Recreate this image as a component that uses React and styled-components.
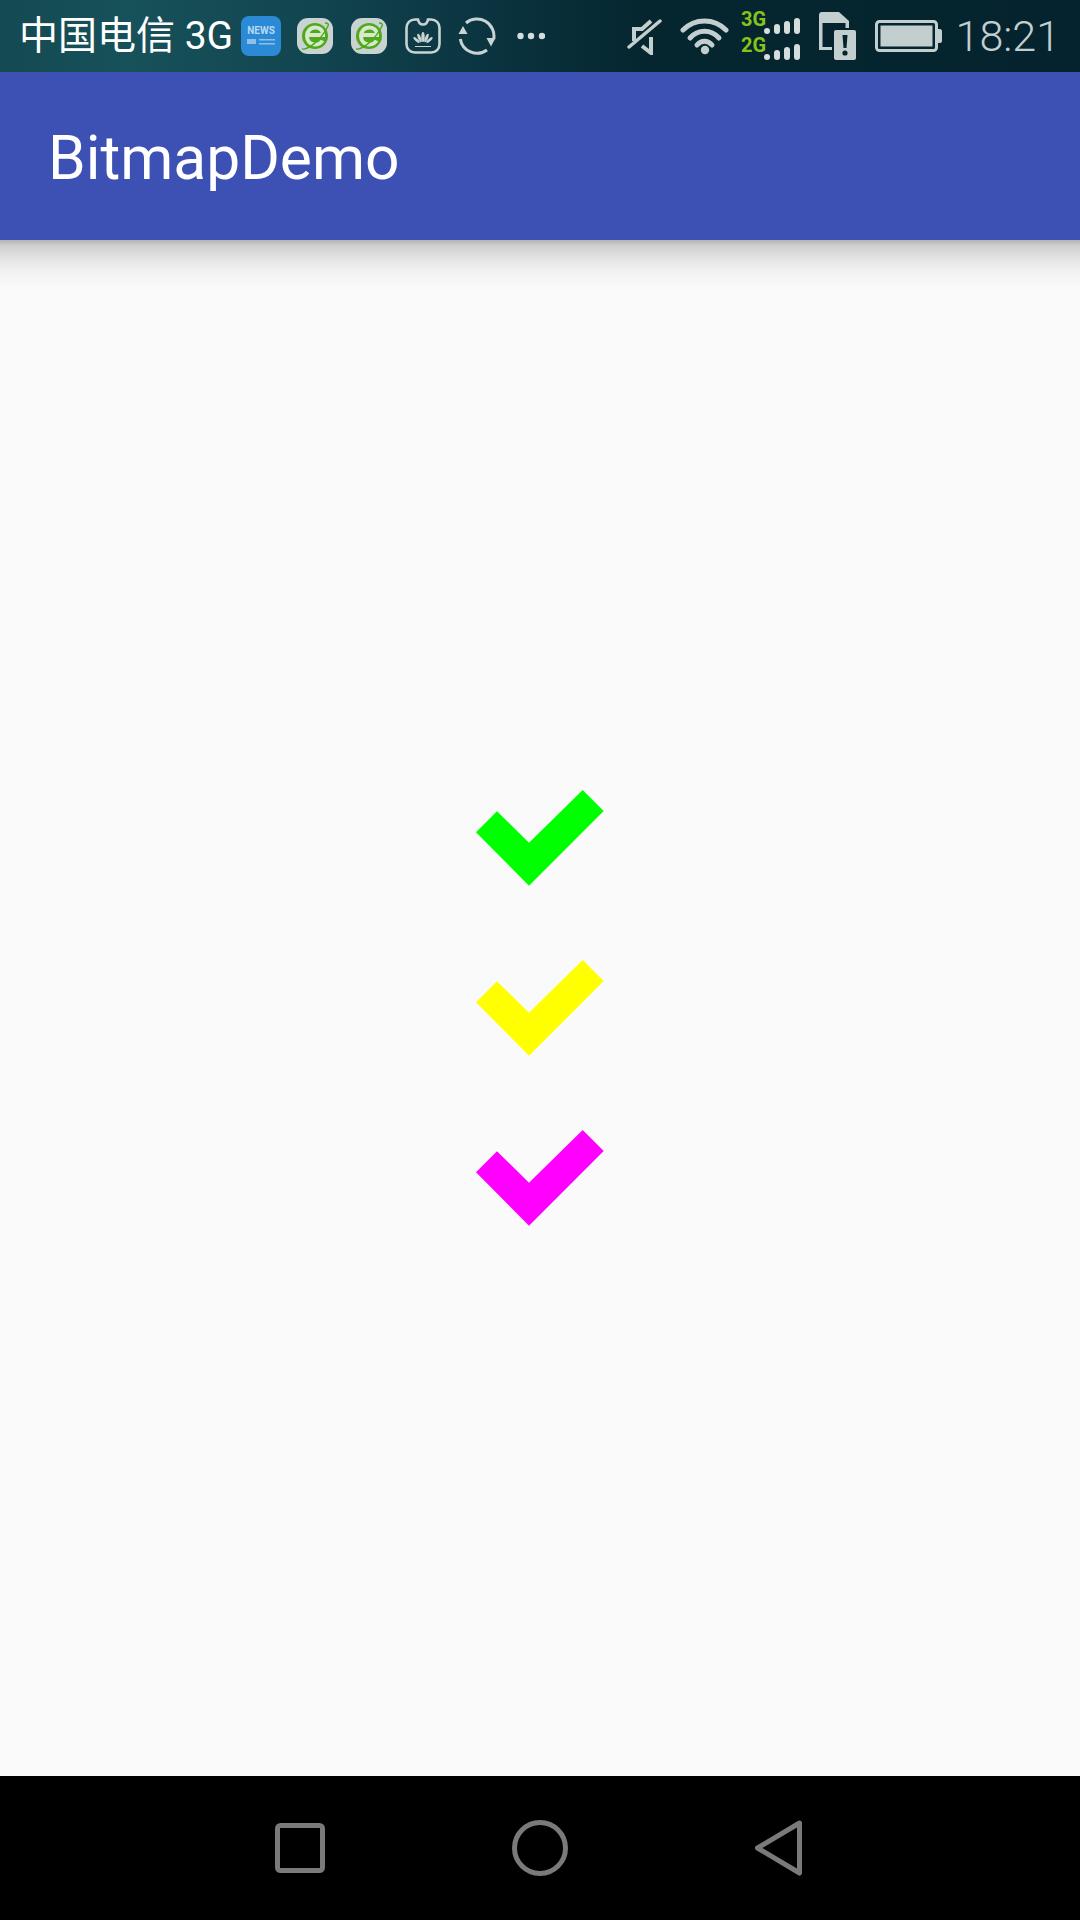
import React from "react";
import styled, { createGlobalStyle } from "styled-components";

const GlobalStyle = createGlobalStyle`
    html, body {
        margin: 0;
        padding: 0;
        background: #fafafa;
    }
`

const Screen = styled.div`
    width: 1080px;
    height: 1920px;
    display: flex;
    flex-direction: column;
    overflow: hidden;
    font-family: Roboto, "Noto Sans CJK SC", sans-serif;
`
const StatusBar = styled.div`
    height: 72px;
    flex: none;
    display: flex;
    align-items: center;
    justify-content: space-between;
    padding: 0 20px 0 19px;
    box-sizing: border-box;
    background: linear-gradient(90deg, #144a52 0, #17515a 12%, #124650 28%, #0a3440 45%, #05262f 60%, #04232e 100%);
`
const StatusGroup = styled.div`
    display: flex;
    align-items: center;
`
const Carrier = styled.span`
    font-size: 39px;
    line-height: 72px;
    color: #fff;
    white-space: nowrap;
`
const Clock = styled.span`
    margin-left: 14px;
    font-size: 43px;
    font-weight: 300;
    line-height: 72px;
    color: #c3cfcf;
`
const StatusIcon = styled.svg`
    display: block;
    flex: none;
    margin-left: ${props => props.$gap || 0}px;
`
const AppBar = styled.div`
    position: relative;
    height: 168px;
    flex: none;
    display: flex;
    align-items: center;
    padding-left: 48px;
    background: #3d51b4;
    &::after {
        content: "";
        position: absolute;
        left: 0;
        right: 0;
        top: 100%;
        height: 48px;
        background: linear-gradient(180deg, #b4b4b4 0, #cfcfcf 12%, #e6e6e6 42%, #f4f4f4 72%, #fafafa 100%);
    }
`
const AppTitle = styled.div`
    margin-top: 6px;
    font-size: 60.5px;
    line-height: 72px;
    color: #fff;
`
const Content = styled.div`
    flex: 1;
    display: flex;
    flex-direction: column;
    align-items: center;
    justify-content: center;
    gap: 74px;
    background: #fafafa;
`
const NavBar = styled.div`
    height: 144px;
    flex: none;
    display: flex;
    align-items: center;
    justify-content: center;
    gap: 187px;
    padding-right: 4px;
    background: #000;
`

const Check = ({ color }) => (
    <svg width="128" height="96" viewBox="0 0 128 96" style={{ display: "block" }}>
        <path d="M0 42.3 21 21.3 53 52.7 106.7 0 127.7 21 53 95.7Z" fill={color} />
    </svg>
);

const EIcon = ({ gap }) => (
    <StatusIcon $gap={gap} width="36" height="36" viewBox="0 0 36 36">
        <rect width="36" height="36" rx="11" fill="#c9d3d1" />
        <circle cx="18" cy="18" r="13" fill="#4fa91c" />
        <path d="M10 17h16c0-4.500-3.200-7.500-7.800-7.500-4.800 0-8.200 3.500-8.200 8.500s3.400 8.500 8.200 8.500c3.400 0 6-1.500 7.200-4" fill="none" stroke="#d9e8cc" strokeWidth="4" />
        <path d="M5 31C10 32 23 24 31 8c1-2 0-3-3-3" fill="none" stroke="#4fa91c" strokeWidth="1.400" />
    </StatusIcon>
);

const App = () => {
    return (
        <Screen>
            <GlobalStyle />
            <StatusBar>
                <StatusGroup>
                    <Carrier>中国电信 3G</Carrier>
                    <StatusIcon $gap={8} width="40" height="40" viewBox="0 0 40 40">
                        <rect width="40" height="40" rx="8" fill="#2a8ad6" />
                        <text x="20" y="18" textAnchor="middle" fontFamily="Roboto, sans-serif" fontWeight="700" fontSize="10" fill="#b9d9f2">NEWS</text>
                        <rect x="6" y="23" width="9" height="5" fill="#8fc0e8" />
                        <rect x="18" y="23" width="16" height="1.500" fill="#8fc0e8" />
                        <rect x="18" y="27" width="16" height="1.500" fill="#8fc0e8" />
                    </StatusIcon>
                    <EIcon gap={16} />
                    <EIcon gap={18} />
                    <StatusIcon $gap={18} width="36" height="36" viewBox="0 0 36 36">
                        <path d="M10 1.500h3c.5 3 2.500 5 5 5s4.500-2 5-5h3c5 0 8.500 3.500 8.500 8.500v16c0 5-3.500 8.500-8.500 8.500H10c-5 0-8.500-3.500-8.500-8.500V10C1.500 5 5 1.500 10 1.500Z" fill="none" stroke="#c9d3d3" strokeWidth="2.600" />
                        <g fill="#c9d3d3">
                            <ellipse cx="18" cy="19" rx="1.700" ry="5" />
                            <ellipse cx="14.500" cy="20" rx="1.500" ry="4.500" transform="rotate(-22 14.500 20)" />
                            <ellipse cx="21.500" cy="20" rx="1.500" ry="4.500" transform="rotate(22 21.500 20)" />
                            <ellipse cx="11.500" cy="22" rx="1.400" ry="4" transform="rotate(-48 11.500 22)" />
                            <ellipse cx="24.500" cy="22" rx="1.400" ry="4" transform="rotate(48 24.500 22)" />
                            <rect x="10" y="28" width="16" height="1" />
                        </g>
                    </StatusIcon>
                    <StatusIcon $gap={17} width="38" height="38" viewBox="0 0 38 38">
                        <path d="M2.300 22A17 17 0 0 0 29 33" fill="none" stroke="#c9d3d3" strokeWidth="3" />
                        <path d="M8 6A17 17 0 0 1 35.700 22" fill="none" stroke="#c9d3d3" strokeWidth="3" />
                        <path d="M5 9 .5 17H9.500Z" fill="#c9d3d3" />
                        <path d="M33 29.500 28.500 21H37.500Z" fill="#c9d3d3" />
                    </StatusIcon>
                    <StatusIcon $gap={21} width="28" height="8" viewBox="0 0 28 8">
                        <circle cx="3.500" cy="4" r="3.200" fill="#d5dddd" />
                        <circle cx="14" cy="4" r="3.200" fill="#d5dddd" />
                        <circle cx="25" cy="4" r="3.200" fill="#d5dddd" />
                    </StatusIcon>
                </StatusGroup>
                <StatusGroup>
                    <StatusIcon width="36" height="37" viewBox="0 0 36 37">
                        <path d="M3 29 34 3" stroke="#c3cfcf" strokeWidth="3.500" strokeLinecap="round" />
                        <path d="M8 23V11h8l9-8" fill="none" stroke="#c3cfcf" strokeWidth="4" />
                        <path d="M16 28l9 7V19" fill="none" stroke="#c3cfcf" strokeWidth="4" />
                    </StatusIcon>
                    <StatusIcon $gap={18} width="49" height="37" viewBox="0 0 49 37">
                        <g fill="none" stroke="#c3cfcf" strokeWidth="5" strokeLinecap="round">
                            <path d="M3 12C15 0 34 0 46 12" />
                            <path d="M10 20C18 11 31 11 39 20" />
                            <path d="M17 27C21 22 28 22 32 27" />
                        </g>
                        <circle cx="25" cy="32" r="4.200" fill="#c3cfcf" />
                    </StatusIcon>
                    <StatusIcon $gap={12} width="60" height="60" viewBox="0 -3 60 60">
                        <g fontFamily="Roboto, sans-serif" fontWeight="700" fontSize="20" fill="#86c41c">
                            <text x="0" y="17">3G</text>
                            <text x="0" y="43">2G</text>
                        </g>
                        <g fill="#d5dddd">
                            <circle cx="26" cy="22" r="3" />
                            <rect x="33" y="15" width="6" height="10" rx="3" />
                            <rect x="43" y="12" width="6" height="13" rx="3" />
                            <rect x="53" y="9" width="6" height="16" rx="3" />
                            <circle cx="26" cy="48" r="3" />
                            <rect x="33" y="41" width="6" height="10" rx="3" />
                            <rect x="43" y="38" width="6" height="13" rx="3" />
                            <rect x="53" y="35" width="6" height="16" rx="3" />
                        </g>
                    </StatusIcon>
                    <StatusIcon $gap={18} width="37" height="48" viewBox="0 0 37 48">
                        <path d="M3 0H20L30 9V38H0V3C0 1 1 0 3 0Z" fill="#c3cfcf" />
                        <rect x="3.500" y="11" width="23" height="24" fill="#04232e" />
                        <rect x="13" y="16" width="24" height="32" rx="2" fill="#04232e" />
                        <rect x="15" y="18" width="22" height="30" rx="2" fill="#c3cfcf" />
                        <path d="M23.500 23h5l-1 13h-3Z" fill="#04232e" />
                        <circle cx="26" cy="41" r="2.600" fill="#04232e" />
                    </StatusIcon>
                    <StatusIcon $gap={19} width="67" height="32" viewBox="0 0 67 32">
                        <rect x="1.500" y="1.500" width="60" height="29" rx="3" fill="none" stroke="#c3cfcf" strokeWidth="3" />
                        <rect x="5.500" y="5.500" width="52" height="21" fill="#c3cfcf" />
                        <path d="M63 9h2c1 0 2 1 2 2v10c0 1-1 2-2 2h-2Z" fill="#c3cfcf" />
                    </StatusIcon>
                    <Clock>18:21</Clock>
                </StatusGroup>
            </StatusBar>
            <AppBar>
                <AppTitle>BitmapDemo</AppTitle>
            </AppBar>
            <Content>
                <Check color="#00ff00" />
                <Check color="#ffff00" />
                <Check color="#ff00ff" />
            </Content>
            <NavBar>
                <svg width="50" height="50" viewBox="0 0 50 50">
                    <rect x="2.500" y="2.500" width="45" height="45" rx="3" fill="none" stroke="#7a7a7a" strokeWidth="5" />
                </svg>
                <svg width="56" height="56" viewBox="0 0 56 56">
                    <circle cx="28" cy="28" r="25.500" fill="none" stroke="#7a7a7a" strokeWidth="5" />
                </svg>
                <svg width="47" height="56" viewBox="0 0 47 56">
                    <path d="M44.500 3 2.500 28 44.500 53Z" fill="none" stroke="#7a7a7a" strokeWidth="5" strokeLinejoin="round" />
                </svg>
            </NavBar>
        </Screen>
    );
};

export default App;
